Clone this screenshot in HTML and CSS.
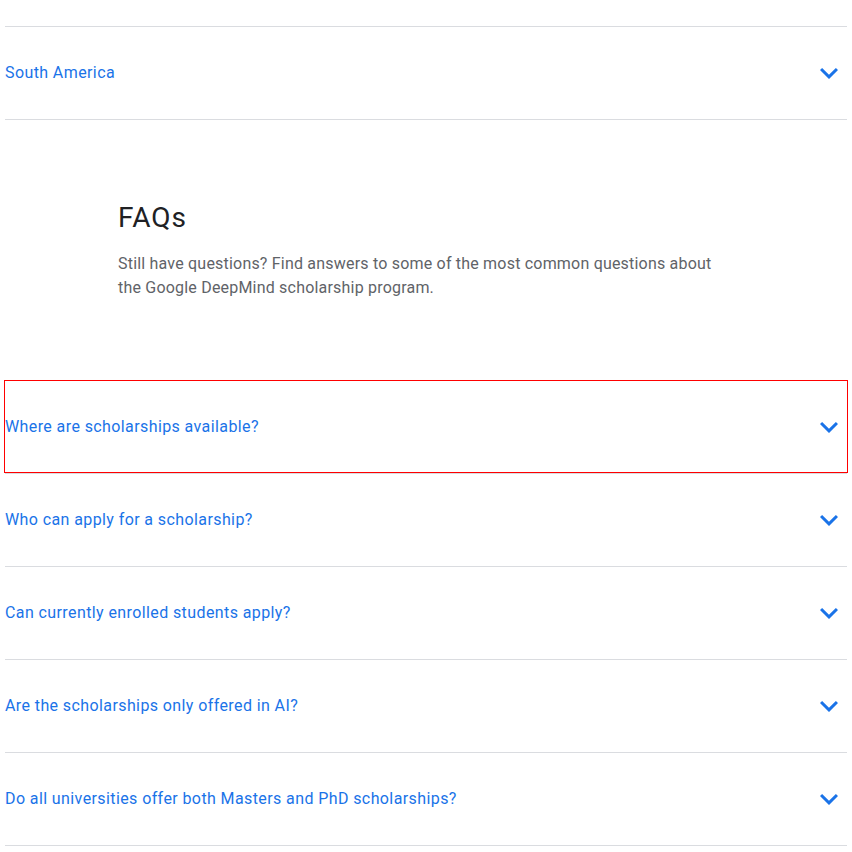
FILE: index.html
```html
<!DOCTYPE html>
<html lang="en">
<head>
<meta charset="utf-8">
<title>FAQs</title>
<link rel="stylesheet" href="styles.css">
</head>
<body>
<div class="page">
  <div class="list list-top">
    <div class="item">
      <button class="row" type="button">
        <span class="label">South America</span>
        <svg class="chev" viewBox="0 0 24 24" width="36" height="36"><path d="M16.59 8.59L12 13.17 7.41 8.59 6 10l6 6 6-6z"/></svg>
      </button>
    </div>
  </div>

  <section class="intro">
    <h2 class="title">FAQs</h2>
    <p class="lead">Still have questions? Find answers to some of the most common questions about the Google DeepMind scholarship program.</p>
  </section>

  <div class="list">
    <div class="item">
      <button class="row focused" type="button">
        <span class="label">Where are scholarships available?</span>
        <svg class="chev" viewBox="0 0 24 24" width="36" height="36"><path d="M16.59 8.59L12 13.17 7.41 8.59 6 10l6 6 6-6z"/></svg>
      </button>
    </div>
    <div class="item">
      <button class="row" type="button">
        <span class="label">Who can apply for a scholarship?</span>
        <svg class="chev" viewBox="0 0 24 24" width="36" height="36"><path d="M16.59 8.59L12 13.17 7.41 8.59 6 10l6 6 6-6z"/></svg>
      </button>
    </div>
    <div class="item">
      <button class="row" type="button">
        <span class="label">Can currently enrolled students apply?</span>
        <svg class="chev" viewBox="0 0 24 24" width="36" height="36"><path d="M16.59 8.59L12 13.17 7.41 8.59 6 10l6 6 6-6z"/></svg>
      </button>
    </div>
    <div class="item">
      <button class="row" type="button">
        <span class="label">Are the scholarships only offered in AI?</span>
        <svg class="chev" viewBox="0 0 24 24" width="36" height="36"><path d="M16.59 8.59L12 13.17 7.41 8.59 6 10l6 6 6-6z"/></svg>
      </button>
    </div>
    <div class="item">
      <button class="row" type="button">
        <span class="label">Do all universities offer both Masters and PhD scholarships?</span>
        <svg class="chev" viewBox="0 0 24 24" width="36" height="36"><path d="M16.59 8.59L12 13.17 7.41 8.59 6 10l6 6 6-6z"/></svg>
      </button>
    </div>
  </div>
</div>
</body>
</html>
```

FILE: styles.css
```css
html, body {
  margin: 0;
  padding: 0;
  background: #ffffff;
}

body {
  font-family: Roboto, "Liberation Sans", Arial, sans-serif;
  color: #202124;
}

.page {
  padding: 26px 5px 0 5px;
}

.list-top {
  border-top: 1px solid #dadce0;
}

.item {
  border-bottom: 1px solid #dadce0;
}

.row {
  display: flex;
  align-items: center;
  justify-content: space-between;
  width: 100%;
  height: 92px;
  margin: 0;
  padding: 0;
  border: 0;
  background: transparent;
  font: inherit;
  text-align: left;
  cursor: pointer;
}

.row.focused {
  height: 91px;
  margin: 1px 0;
  outline: 1px solid #ff0000;
}

.label {
  font-size: 16px;
  line-height: 24px;
  color: #1a73e8;
  letter-spacing: 0.4px;
}

.chev {
  display: block;
  flex: none;
  fill: #1a73e8;
}

.intro {
  padding: 80px 0 80px 113px;
}

.title {
  margin: 0;
  font-size: 28px;
  line-height: 36px;
  font-weight: 400;
  color: #202124;
  letter-spacing: 1px;
}

.lead {
  margin: 16px 0 0 0;
  width: 600px;
  font-size: 16px;
  line-height: 24px;
  color: #5f6368;
  letter-spacing: 0.2px;
}
```
